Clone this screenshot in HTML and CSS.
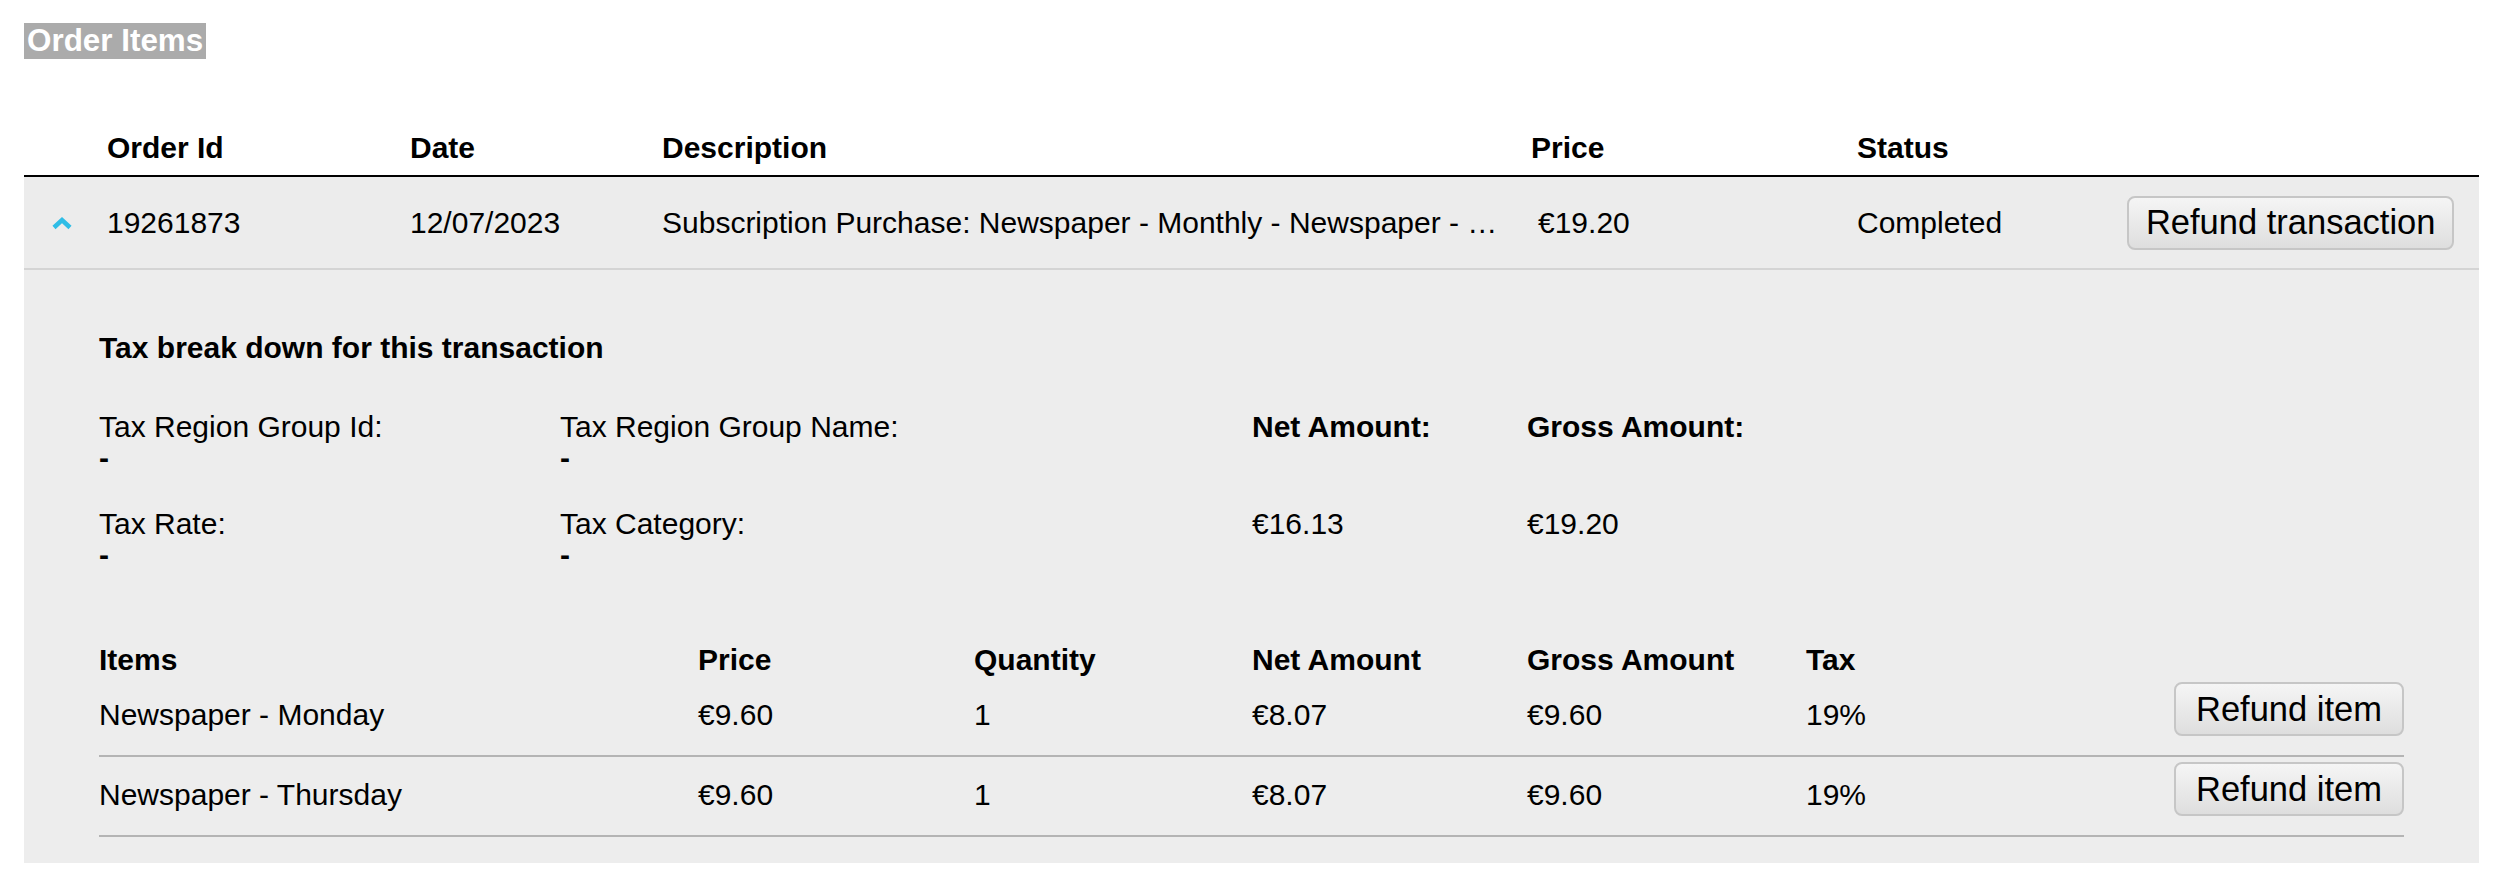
FILE: index.html
```html
<!DOCTYPE html>
<html lang="en">
<head>
<meta charset="utf-8">
<title>Order Items</title>
<link rel="stylesheet" href="styles.css">
</head>
<body>
<div class="page">
  <div class="title"><span class="title-text">Order Items</span></div>
  <table class="orders">
    <colgroup>
      <col class="c-toggle"><col class="c-id"><col class="c-date"><col class="c-desc"><col class="c-price"><col class="c-status"><col class="c-action">
    </colgroup>
    <thead>
      <tr>
        <th></th>
        <th>Order Id</th>
        <th>Date</th>
        <th>Description</th>
        <th>Price</th>
        <th>Status</th>
        <th></th>
      </tr>
    </thead>
    <tbody>
      <tr class="order-row">
        <td class="toggle">
          <svg class="chevron" width="22" height="14" viewBox="0 0 22 14"><polyline points="3,11.5 11,4 19,11.5" fill="none" stroke="#2fbde6" stroke-width="4.5" stroke-linejoin="miter"/></svg>
        </td>
        <td>19261873</td>
        <td>12/07/2023</td>
        <td class="desc">Subscription Purchase: Newspaper - Monthly - Newspaper - …</td>
        <td class="price">€19.20</td>
        <td>Completed</td>
        <td class="action"><button class="btn btn-tx">Refund transaction</button></td>
      </tr>
      <tr class="detail-row">
        <td colspan="7" class="detail">
          <div class="detail-title">Tax break down for this transaction</div>
          <div class="tax-grid">
            <div class="tax-cell"><div>Tax Region Group Id:</div><div class="tax-value">-</div></div>
            <div class="tax-cell"><div>Tax Region Group Name:</div><div class="tax-value">-</div></div>
            <div class="tax-cell strong">Net Amount:</div>
            <div class="tax-cell strong">Gross Amount:</div>
            <div class="tax-cell"><div>Tax Rate:</div><div class="tax-value">-</div></div>
            <div class="tax-cell"><div>Tax Category:</div><div class="tax-value">-</div></div>
            <div class="tax-cell">€16.13</div>
            <div class="tax-cell">€19.20</div>
          </div>
          <div class="items">
            <div class="items-head">
              <div>Items</div><div>Price</div><div>Quantity</div><div>Net Amount</div><div>Gross Amount</div><div>Tax</div><div></div>
            </div>
            <div class="item-row">
              <div>Newspaper - Monday</div><div>€9.60</div><div>1</div><div>€8.07</div><div>€9.60</div><div>19%</div>
              <div class="item-action"><button class="btn btn-item">Refund item</button></div>
            </div>
            <div class="item-row">
              <div>Newspaper - Thursday</div><div>€9.60</div><div>1</div><div>€8.07</div><div>€9.60</div><div>19%</div>
              <div class="item-action"><button class="btn btn-item">Refund item</button></div>
            </div>
          </div>
        </td>
      </tr>
    </tbody>
  </table>
</div>
</body>
</html>
```
FILE: styles.css
```css
html, body {
  margin: 0;
  padding: 0;
  background: #ffffff;
}
body {
  font-family: "Liberation Sans", Arial, sans-serif;
  font-size: 30px;
  color: #000;
}
.page {
  padding: 23px 21px 0 24px;
}
.title {
  font-size: 31.4px;
  font-weight: bold;
  line-height: 36px;
  margin-bottom: 62px;
}
.title-text {
  display: inline-block;
  background: #ababab;
  color: #fff;
  padding: 0 3px;
}
.orders {
  width: 100%;
  table-layout: fixed;
  border-collapse: separate;
  border-spacing: 0;
}
.c-toggle { width: 83px; }
.c-id { width: 303px; }
.c-date { width: 252px; }
.c-desc { width: 869px; }
.c-price { width: 326px; }
.c-status { width: 253px; }
.c-action { width: 369px; }
.orders th {
  text-align: left;
  font-weight: bold;
  padding: 10px 0;
  border-bottom: 2px solid #000;
  line-height: 34px;
}
.order-row td {
  background: #ececec;
  height: 91px;
  padding: 0;
  vertical-align: middle;
  border-bottom: 2px solid #d4d4d4;
  white-space: nowrap;
}
.order-row td.toggle {
  padding-left: 27px;
}
.chevron {
  display: block;
  margin-top: 1px;
}
.order-row td.desc {
  padding-right: 20px;
}
.order-row td.price {
  padding-left: 7px;
}
.order-row td.action {
  text-align: right;
  padding-right: 25px;
}
.btn {
  font-family: "Liberation Sans", Arial, sans-serif;
  font-size: 34.5px;
  line-height: 1;
  height: 54px;
  box-sizing: border-box;
  border: 2px solid #c6c6c6;
  border-radius: 8px;
  background: linear-gradient(#f5f5f5, #dedede);
  color: #000;
  margin: 0;
}
.btn-tx {
  padding: 0 16.5px;
}
.btn-item {
  padding: 0 20px;
}
.detail-row td.detail {
  background: #ededed;
  padding: 61px 75px 26px;
}
.detail-title {
  font-weight: bold;
  line-height: 34px;
  margin-bottom: 45px;
}
.tax-grid {
  display: grid;
  grid-template-columns: 461px 692px 275px 1fr;
  row-gap: 33px;
  line-height: 34px;
  margin-bottom: 72px;
}
.tax-cell.strong {
  font-weight: bold;
}
.tax-value {
  font-weight: bold;
  line-height: 30px;
  margin-top: -1px;
  margin-bottom: 1px;
}
.items-head,
.item-row {
  display: grid;
  grid-template-columns: 599px 276px 278px 275px 279px 1fr auto;
  line-height: 34px;
}
.items-head {
  font-weight: bold;
}
.item-row {
  border-bottom: 2px solid #b4b4b4;
}
.item-row > div {
  padding: 21px 0 23px;
}
.item-row > div.item-action {
  padding: 5px 0 0;
}
.item-action .btn {
  display: block;
}
```
